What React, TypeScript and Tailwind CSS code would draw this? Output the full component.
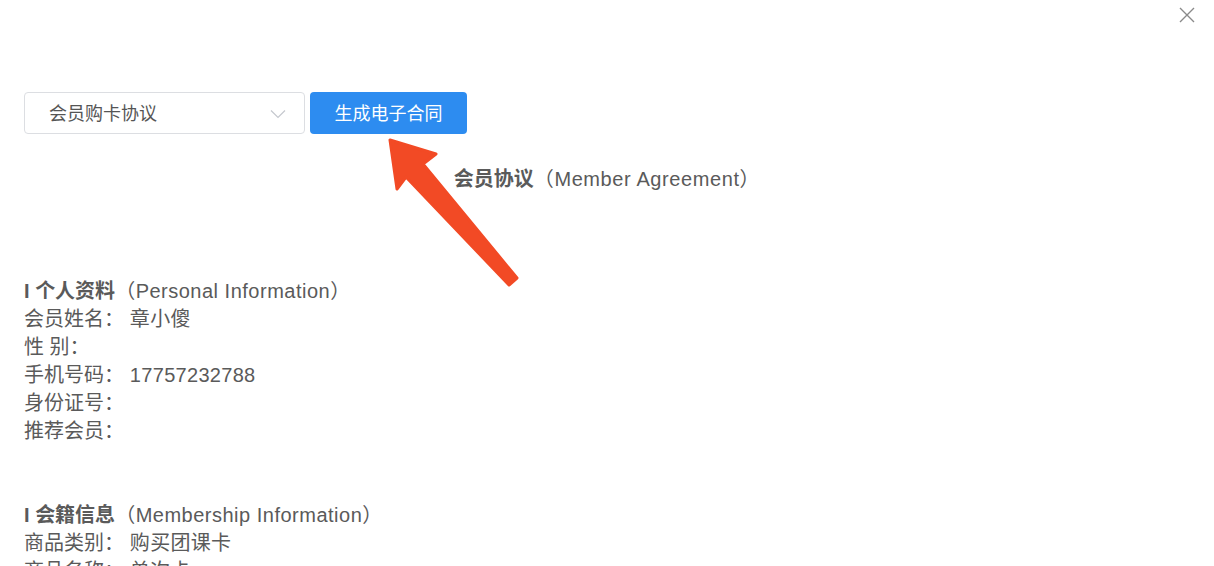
import React from "react";

const font = { fontFamily: '"Liberation Sans", "Noto Sans CJK SC", sans-serif' };

function Section({ title, en, rows }: { title: string; en: string; rows: [string, string][] }) {
  return (
    <div>
      <div className="leading-[28px]">
        <span className="font-bold">I {title}</span>
        <span className="tracking-[0.5px]">（{en}）</span>
      </div>
      {rows.map(([k, v], i) => (
        <div key={i} className="leading-[28px] whitespace-pre">
          {k}：<span className="tracking-[0.3px]"> {v}</span>
        </div>
      ))}
    </div>
  );
}

export default function App() {
  return (
    <div className="relative w-[1214px] h-[566px] overflow-hidden bg-white text-[#5a5a5a]" style={font}>
      <button className="absolute right-[18px] top-[6px] text-[#8a8a8a]">
        <svg width="18" height="18" viewBox="0 0 18 18" fill="none" stroke="currentColor" strokeWidth="1.4">
          <path d="M2 2 L16 16 M16 2 L2 16" />
        </svg>
      </button>

      <div className="px-6 pt-[92px]">
        <div className="flex items-center gap-[5px]">
          <div className="flex h-[42px] w-[281px] items-center justify-between rounded-[4px] border border-[#dcdee2] pl-6 pr-[18px] pt-[2px] text-[18px] text-[#555]">
            <span>会员购卡协议</span>
            <svg width="16" height="10" viewBox="0 0 16 10" fill="none" stroke="#c5c8ce" strokeWidth="1.2">
              <path d="M1 1.5 L8 8.5 L15 1.5" />
            </svg>
          </div>
          <button className="flex h-[42px] w-[157px] items-center justify-center rounded-[4px] bg-[#2d8cf0] pt-[2px] text-[18px] text-white">
            生成电子合同
          </button>
        </div>

        <div className="mt-[31px] text-center text-[20px] leading-[28px]">
          <span className="font-bold">会员协议</span>
          <span className="tracking-[0.6px]">（Member Agreement）</span>
        </div>

        <div className="mt-[84px] text-[20px]">
          <Section
            title="个人资料"
            en="Personal Information"
            rows={[
              ["会员姓名", "章小傻"],
              ["性 别", ""],
              ["手机号码", "17757232788"],
              ["身份证号", ""],
              ["推荐会员", ""],
            ]}
          />
          <div className="h-[56px]" />
          <Section
            title="会籍信息"
            en="Membership Information"
            rows={[
              ["商品类别", "购买团课卡"],
              ["商品名称", "单次卡"],
            ]}
          />
        </div>
      </div>

      <svg className="pointer-events-none absolute left-0 top-0" width="1214" height="566" viewBox="0 0 1214 566">
        <polygon
          points="390,140 436,154 423,164 517,278 509,285 406,177 397,189"
          fill="#f24a25"
          stroke="#f24a25"
          strokeWidth="3"
          strokeLinejoin="round"
        />
      </svg>
    </div>
  );
}
